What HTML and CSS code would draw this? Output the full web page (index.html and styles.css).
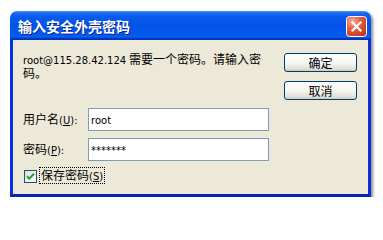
FILE: index.html
```html
<!DOCTYPE html>
<html lang="zh-CN">
<head>
<meta charset="utf-8">
<title>输入安全外壳密码</title>
<link rel="stylesheet" href="styles.css">
</head>
<body>
<div class="window">
  <div class="titlebar">
    <span class="title">输入安全外壳密码</span>
    <span class="close">
      <svg width="21" height="21" viewBox="0 0 21 21">
        <defs>
          <radialGradient id="rg" cx="30%" cy="25%" r="85%">
            <stop offset="0" stop-color="#f4b19c"/>
            <stop offset="0.45" stop-color="#e2603f"/>
            <stop offset="1" stop-color="#c23a1a"/>
          </radialGradient>
        </defs>
        <rect x="0.5" y="0.5" width="20" height="20" rx="3" fill="url(#rg)" stroke="#fff"/>
        <path d="M6.5 6.5 L14.5 14.5 M14.5 6.5 L6.5 14.5" stroke="#fff" stroke-width="2.2" stroke-linecap="square"/>
      </svg>
    </span>
  </div>
  <div class="client">
    <div class="main">
      <p class="msg"><span class="lat">root@115.28.42.124</span> <span class="cjk">需要一个密码。请输入密</span><span class="cjk">码。</span></p>
      <div class="row first">
        <span class="lbl">用户名<span class="lat">(<u>U</u>):</span></span>
        <div class="field"><span class="lat">root</span></div>
      </div>
      <div class="row">
        <span class="lbl">密码<span class="lat">(<u>P</u>):</span></span>
        <div class="field"><span class="lat">*******</span></div>
      </div>
      <div class="check">
        <span class="box">
          <svg width="13" height="13" viewBox="0 0 13 13">
            <defs>
              <linearGradient id="cg" x1="0" y1="0" x2="1" y2="1">
                <stop offset="0" stop-color="#dcdbd5"/>
                <stop offset="1" stop-color="#ffffff"/>
              </linearGradient>
            </defs>
            <rect x="0.5" y="0.5" width="12" height="12" fill="url(#cg)" stroke="#1c5180"/>
            <path d="M3 6.2 L5.3 8.6 L10 3.8" fill="none" stroke="#21a121" stroke-width="2"/>
          </svg>
        </span>
        <span class="focus">保存密码<span class="lat">(<u>S</u>)</span></span>
      </div>
    </div>
    <div class="buttons">
      <div class="btn">确定</div>
      <div class="btn">取消</div>
    </div>
  </div>
</div>
</body>
</html>
```

FILE: styles.css
```css
html, body {
  margin: 0;
  background: #ffffff;
}

body {
  font-family: "Noto Sans CJK SC", "DejaVu Sans", sans-serif;
  font-size: 12px;
  line-height: 12px;
  color: #000;
}

.lat {
  font-family: "DejaVu Sans", "Noto Sans CJK SC", sans-serif;
  font-size: 10px;
}

.window {
  margin: 11px 0 0 10px;
  width: 361px;
  height: 186px;
  display: flex;
  flex-direction: column;
  border-radius: 7px 7px 0 0;
  box-shadow: 2px 2px 3px rgba(0, 0, 0, 0.45);
}

.titlebar {
  box-sizing: border-box;
  flex: 0 0 29px;
  height: 29px;
  display: flex;
  align-items: center;
  justify-content: space-between;
  padding: 0 4px 0 8px;
  border-radius: 7px 7px 0 0;
  background: linear-gradient(#4a96f8 0, #1a6cf0 2px, #0a5cec 5px, #0254e8 50%, #0459ee 84%, #0b62f2 89%, #003ccd 94%, #0030b6 100%);
}

.title {
  color: #fff;
  font-weight: bold;
  font-size: 14px;
  line-height: 14px;
  text-shadow: 1px 1px 0 #0a2590;
}

.close {
  display: flex;
  width: 21px;
  height: 21px;
  margin-top: 2px;
}

.client {
  box-sizing: border-box;
  flex: 1 1 auto;
  display: flex;
  background: #ece9d8;
  border: 3px solid #0831d9;
  border-top: 0;
  border-bottom-color: #0726b8;
  padding: 13px 11px 0 10px;
}

.main {
  flex: 1;
}

.msg {
  margin: 0;
  width: 244px;
  height: 24px;
}

.row {
  display: flex;
  align-items: center;
  margin-top: 7px;
}

.row.first {
  margin-top: 31px;
}

.lbl {
  width: 65px;
  white-space: nowrap;
}

.field {
  box-sizing: border-box;
  width: 181px;
  height: 23px;
  border: 1px solid #7f9db9;
  background: #fff;
  padding: 3px 0 0 2px;
  line-height: 13px;
}

.check {
  display: flex;
  align-items: center;
  margin-top: 7px;
  height: 15px;
}

.box {
  display: flex;
  width: 13px;
  height: 13px;
  margin-left: 1px;
  margin-top: 2px;
}

.focus {
  margin-left: 2px;
  border: 1px dotted #000;
  padding: 0 1px;
  line-height: 13px;
}

.buttons {
  width: 73px;
  display: flex;
  flex-direction: column;
  gap: 9px;
}

.btn {
  box-sizing: border-box;
  height: 19px;
  border: 1px solid #003c74;
  border-radius: 3px;
  background: linear-gradient(#ffffff, #f5f5f1 55%, #e3e0d6 85%, #d0cbbd);
  display: flex;
  align-items: center;
  justify-content: center;
}
```
